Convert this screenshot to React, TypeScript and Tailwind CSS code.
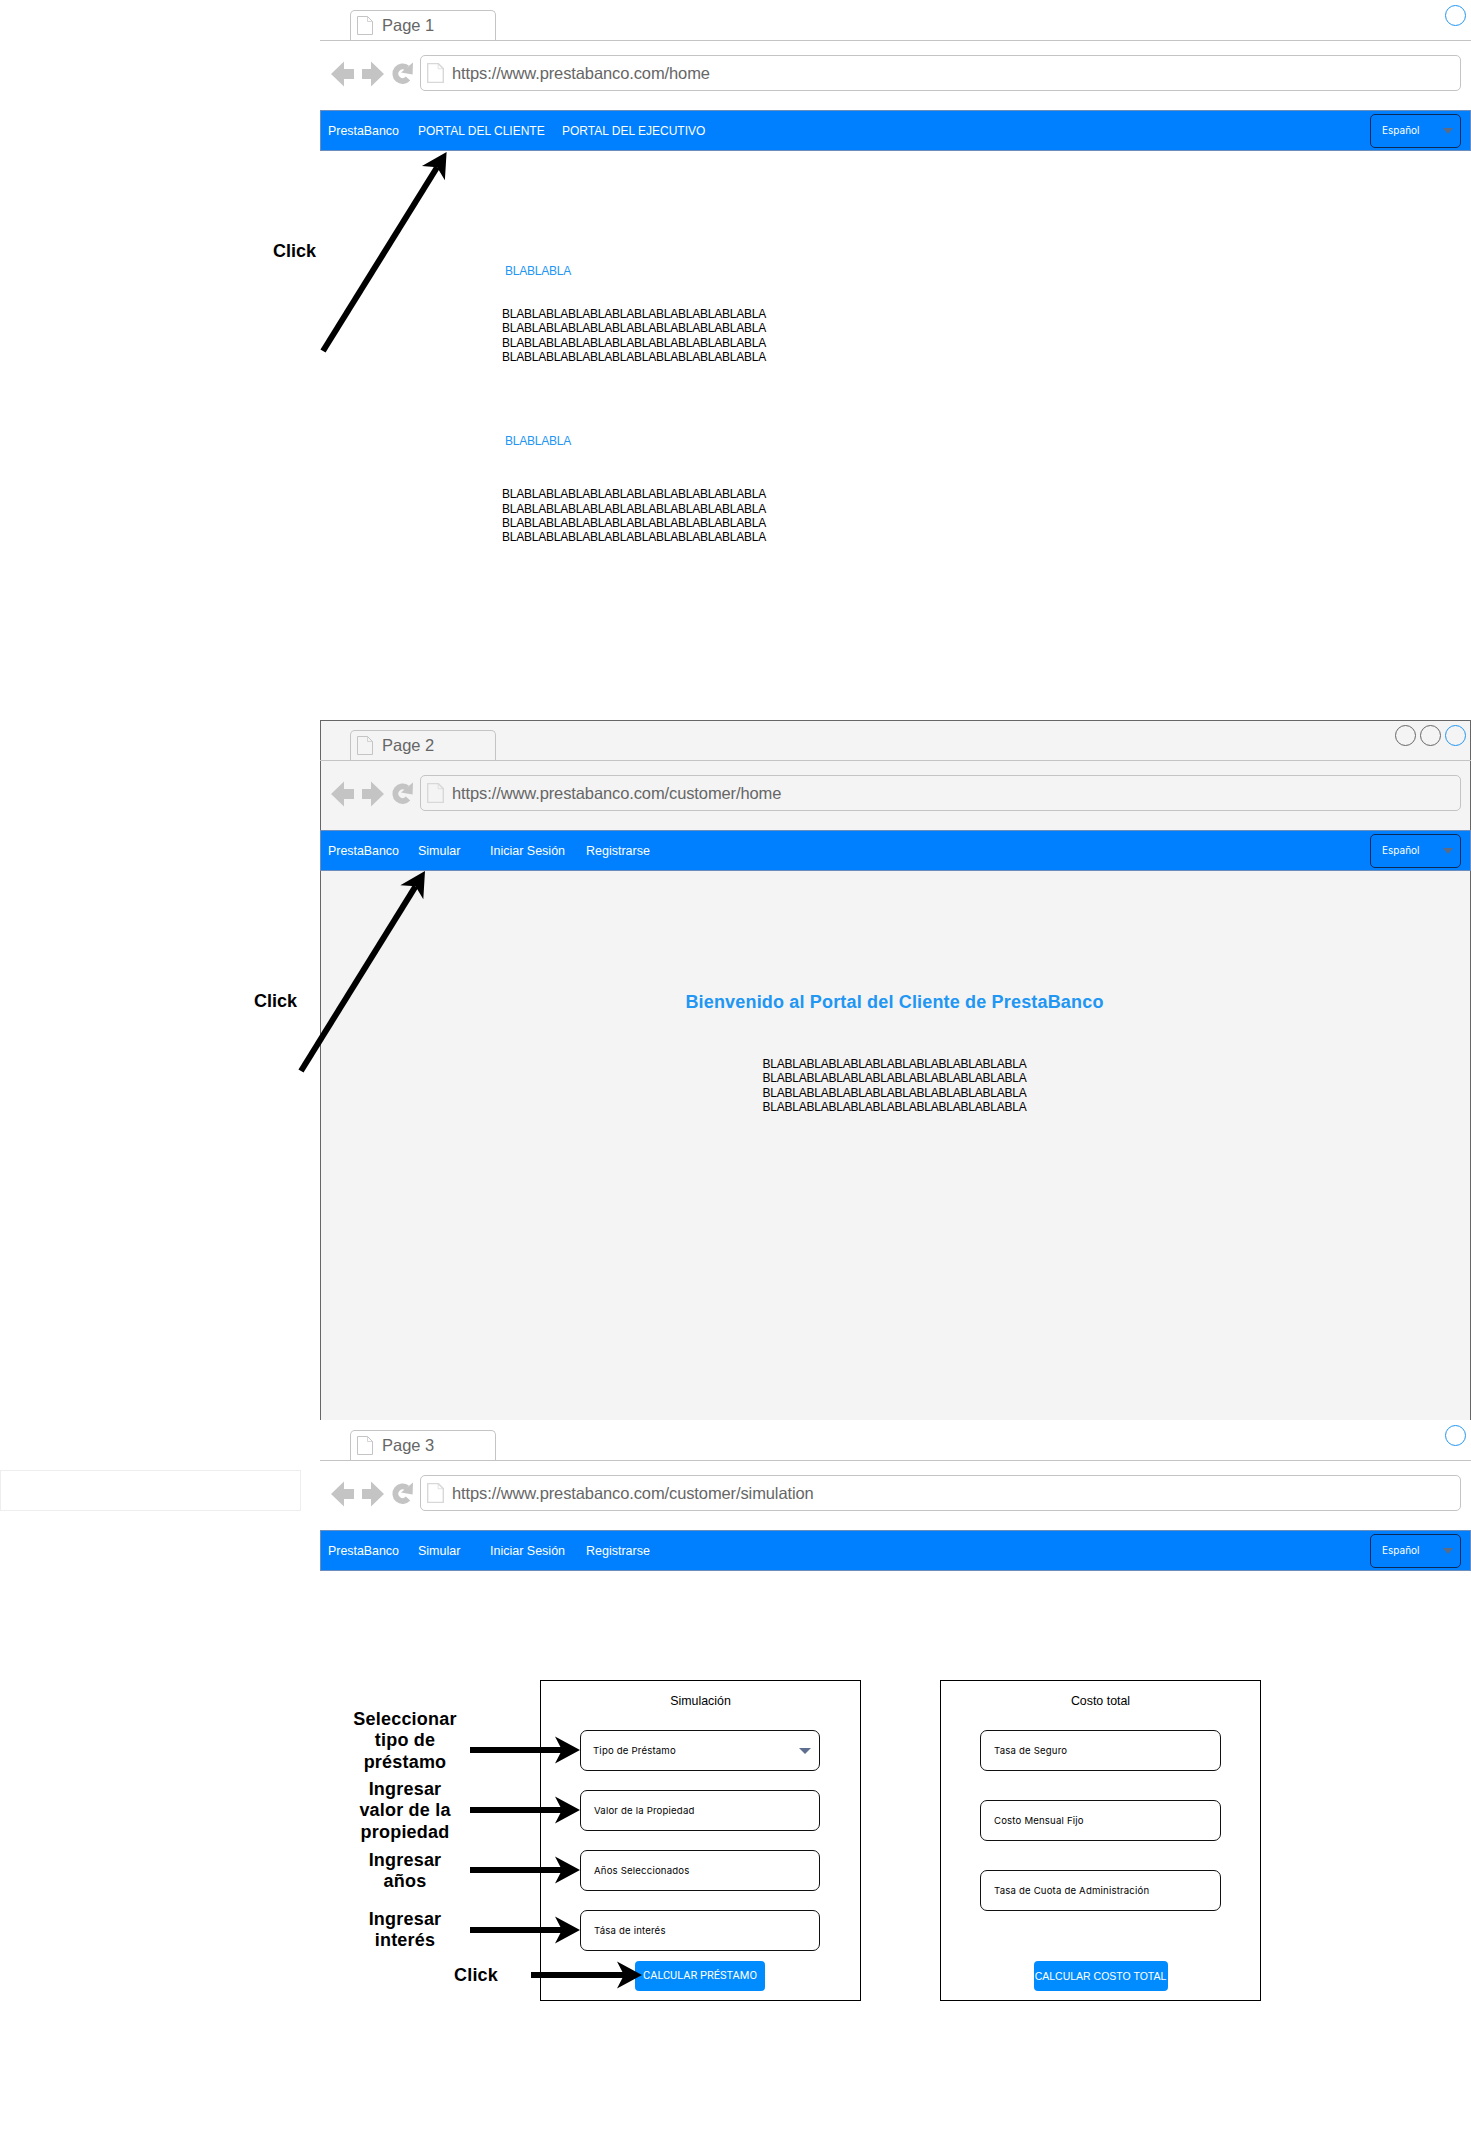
import React from "react";

const BLA = "BLABLABLABLABLABLABLABLABLABLABLABLA";

function PageIcon({ thick }: { thick?: boolean }) {
  return (
    <svg width={thick ? 17 : 16} height={thick ? 20 : 19} viewBox="0 0 16 19" fill="none" className="shrink-0">
      <path
        d="M0.5 0.5H10.5L15.5 5.5V18.5H0.5Z"
        stroke={thick ? "#d8d8d8" : "#c4c4c4"}
        strokeWidth={thick ? 1.5 : 1}
        fill="none"
      />
      <path d="M10.5 0.5V5.5H15.5" stroke={thick ? "#d8d8d8" : "#c4c4c4"} strokeWidth="0.7" fill="none" />
    </svg>
  );
}

function NavIcons() {
  return (
    <svg width="84" height="28" viewBox="0 0 84 28" className="shrink-0">
      <path d="M0 14L13 1.5V9H23V19H13V26.5Z" fill="#c4c4c4" />
      <path d="M53 14L40 1.5V9H31V19H40V26.5Z" fill="#c4c4c4" />
      <path d="M76 8A7.2 7.2 0 1 0 77 18.5" stroke="#c4c4c4" strokeWidth="6" fill="none" />
      <path d="M82 2.5L81.6 14.5L70 12.4Z" fill="#c4c4c4" />
    </svg>
  );
}

function BrowserChrome({ page, url, links }: { page: string; url: string; links: { label: string; className: string }[] }) {
  return (
    <>
      <div className="flex h-[41px] items-end border-b border-[#c4c4c4] pl-[30px]">
        <div className="-mb-px flex h-[31px] w-[146px] items-center gap-[9px] rounded-t-[5px] border border-b-0 border-[#c4c4c4] bg-inherit pb-px pl-[6px]">
          <PageIcon />
          <span className="text-[16.5px] text-[#666666]">{page}</span>
        </div>
      </div>
      <div className="flex h-[69px] items-start pl-[11px] pr-[10px] pt-[14px]">
        <div className="pr-[5px] pt-[5px]">
          <NavIcons />
        </div>
        <div className="flex h-[36px] flex-1 items-center gap-[8px] rounded-[5px] border border-[#c4c4c4] pl-[6px]">
          <PageIcon thick />
          <span className="text-[16.5px] tracking-[-0.11px] text-[#666666]">{url}</span>
        </div>
      </div>
      <div className="flex h-[41px] items-center border border-[#6c8ebf] bg-[#007fff] pl-[7px] pr-[9px]">
        <span className="w-[90px] pt-px text-[12.4px] text-white">PrestaBanco</span>
        {links.map((l) => (
          <span key={l.label} className={`${l.className} pt-px text-white`}>
            {l.label}
          </span>
        ))}
        <div className="ml-auto flex h-[34px] w-[91px] items-center justify-between rounded-[5px] border border-[#0b2a57] pl-[11px] pr-[7px] font-['Inter',sans-serif] text-[10px] text-white">
          <span>Español</span>
          <span className="h-0 w-0 border-x-[5.5px] border-t-[6px] border-x-transparent border-t-[#5f6b80]" />
        </div>
      </div>
    </>
  );
}

function WinButton({ color }: { color: string }) {
  return <span className={`h-[21px] w-[21px] rounded-full border ${color}`} />;
}

function Arrow({ x1, y1, x2, y2 }: { x1: number; y1: number; x2: number; y2: number }) {
  // classic block arrow, head drawn along the line direction
  const a = Math.atan2(y2 - y1, x2 - x1);
  const pt = (back: number, side: number) =>
    `${x2 - back * Math.cos(a) - side * Math.sin(a)},${y2 - back * Math.sin(a) + side * Math.cos(a)}`;
  const sx = x2 - 18 * Math.cos(a);
  const sy = y2 - 18 * Math.sin(a);
  return (
    <>
      <line x1={x1} y1={y1} x2={sx} y2={sy} stroke="#000" strokeWidth="6" />
      <polygon points={`${x2},${y2} ${pt(25, 13.5)} ${pt(18, 0)} ${pt(25, -13.5)}`} fill="#000" />
    </>
  );
}

function Paragraph() {
  return (
    <div className="text-[12px] leading-[14.33px] tracking-[-0.23px] text-black">
      <div>{BLA}</div>
      <div>{BLA}</div>
      <div>{BLA}</div>
      <div>{BLA}</div>
    </div>
  );
}

function Field({ label, caret, pad }: { label: string; caret?: boolean; pad: string }) {
  return (
    <div className={`flex h-[41px] items-center justify-between rounded-[7px] border border-[#111] ${pad} pr-[8px]`}>
      <span className="pt-[2px] font-['Inter',sans-serif] text-[9.6px] tracking-[0.18px] text-black">{label}</span>
      {caret && <span className="h-0 w-0 border-x-[6px] border-t-[6px] border-x-transparent border-t-[#5f6f8f]" />}
    </div>
  );
}

function SideLabel({ children, className }: { children: React.ReactNode; className: string }) {
  return (
    <div className={`absolute text-center text-[18px] font-bold leading-[21.3px] tracking-[0.2px] text-black ${className}`}>
      {children}
    </div>
  );
}

const customerLinks = [
  { label: "Simular", className: "w-[72px] text-[12.5px]" },
  { label: "Iniciar Sesión", className: "w-[96px] text-[12.5px]" },
  { label: "Registrarse", className: "w-[80px] text-[12.5px]" },
];

export default function App() {
  return (
    <div className="w-[1471px] overflow-hidden bg-white font-['Liberation_Sans',Arial,sans-serif]">
      {/* Page 1 */}
      <section className="relative flex h-[720px]">
        <div className="w-[320px] shrink-0" />
        <div className="flex-1 bg-white">
          <div className="relative">
            <BrowserChrome
              page="Page 1"
              url="https://www.prestabanco.com/home"
              links={[
                { label: "PORTAL DEL CLIENTE", className: "w-[144px] text-[12px]" },
                { label: "PORTAL DEL EJECUTIVO", className: "w-[150px] text-[12px]" },
              ]}
            />
            <div className="absolute right-[5px] top-[5px] flex">
              <WinButton color="border-[#2196f3]" />
            </div>
          </div>
          <div className="pl-[182px] pt-[113px]">
            <div className="pl-[3px] text-[12px] leading-[14px] tracking-[-0.23px] text-[#2196f3]">BLABLABLA</div>
            <div className="pt-[29px]">
              <Paragraph />
            </div>
            <div className="pl-[3px] pt-[70px] text-[12px] leading-[14px] tracking-[-0.23px] text-[#2196f3]">BLABLABLA</div>
            <div className="pt-[39px]">
              <Paragraph />
            </div>
          </div>
        </div>
        <div className="absolute left-[273px] top-[241px] text-[18px] font-bold leading-[21px] text-black">Click</div>
        <svg className="pointer-events-none absolute left-0 top-0" width="1471" height="720">
          <Arrow x1={323} y1={351} x2={446.6} y2={152} />
        </svg>
      </section>

      {/* Page 2 */}
      <section className="relative flex h-[700px]">
        <div className="w-[320px] shrink-0" />
        <div className="flex-1 border border-b-0 border-[#666666] bg-[#f4f4f4]">
          <div className="relative -mx-px -mt-px">
            <BrowserChrome page="Page 2" url="https://www.prestabanco.com/customer/home" links={customerLinks} />
            <div className="absolute right-[5px] top-[5px] flex gap-[4px]">
              <WinButton color="border-[#666666]" />
              <WinButton color="border-[#666666]" />
              <WinButton color="border-[#2196f3]" />
            </div>
          </div>
          <div className="flex flex-col items-center pr-[2px] pt-[118px]">
            <h1 className="text-[18px] font-bold leading-[26px] tracking-[0.17px] text-[#2196f3]">
              Bienvenido al Portal del Cliente de PrestaBanco
            </h1>
            <div className="pt-[42px]">
              <Paragraph />
            </div>
          </div>
        </div>
        <div className="absolute left-[254px] top-[271px] text-[18px] font-bold leading-[21px] text-black">Click</div>
        <svg className="pointer-events-none absolute left-0 top-0" width="1471" height="700">
          <Arrow x1={301} y1={351} x2={425} y2={151} />
        </svg>
      </section>

      {/* Page 3 */}
      <section className="relative flex h-[721px]">
        <div className="w-[320px] shrink-0 pr-[19px] pt-[50px]">
          <div className="h-[41px] border border-[#eeeeee]" />
        </div>
        <div className="flex-1 bg-white">
          <div className="relative">
            <BrowserChrome page="Page 3" url="https://www.prestabanco.com/customer/simulation" links={customerLinks} />
            <div className="absolute right-[5px] top-[5px] flex">
              <WinButton color="border-[#2196f3]" />
            </div>
          </div>
          <div className="flex gap-[80px] pl-[220px] pt-[109px]">
            <div className="flex h-[321px] w-[321px] flex-col border border-black pl-[39px] pr-[40px]">
              <div className="-ml-[39px] -mr-[40px] h-[49px] pt-[13px] text-center text-[12.4px] leading-[14px] text-black">Simulación</div>
              <div className="flex flex-col gap-[19px]">
                <Field label="Tipo de Préstamo" caret pad="pl-[12px]" />
                <Field label="Valor de la Propiedad" pad="pl-[13px]" />
                <Field label="Años Seleccionados" pad="pl-[13px]" />
                <Field label="Tása de interés" pad="pl-[13px]" />
              </div>
              <div className="flex justify-center pt-[10px]">
                <div className="flex h-[30px] w-[130px] items-center justify-center rounded-[4px] bg-[#008cff] pt-px font-['Roboto',sans-serif] text-[11px] text-white">
                  CALCULAR PRÉSTAMO
                </div>
              </div>
            </div>
            <div className="-ml-px flex h-[321px] w-[321px] flex-col border border-black px-[39px]">
              <div className="-mx-[39px] h-[49px] pt-[13px] text-center text-[12.4px] leading-[14px] text-black">Costo total</div>
              <div className="flex flex-col gap-[29px]">
                <Field label="Tasa de Seguro" pad="pl-[13px]" />
                <Field label="Costo Mensual Fijo" pad="pl-[13px]" />
                <Field label="Tasa de Cuota de Administración" pad="pl-[13px]" />
              </div>
              <div className="flex justify-center pt-[50px]">
                <div className="flex h-[30px] w-[134px] items-center justify-center whitespace-nowrap rounded-[4px] bg-[#008cff] pt-px text-[10.5px] text-white">
                  CALCULAR COSTO TOTAL
                </div>
              </div>
            </div>
          </div>
        </div>
        <SideLabel className="left-[345px] top-[289px] w-[120px]">
          Seleccionar
          <br />
          tipo de
          <br />
          préstamo
        </SideLabel>
        <SideLabel className="left-[345px] top-[359px] w-[120px]">
          Ingresar
          <br />
          valor de la
          <br />
          propiedad
        </SideLabel>
        <SideLabel className="left-[345px] top-[430px] w-[120px]">
          Ingresar
          <br />
          años
        </SideLabel>
        <SideLabel className="left-[345px] top-[489px] w-[120px]">
          Ingresar
          <br />
          interés
        </SideLabel>
        <SideLabel className="left-[454px] top-[545px]">Click</SideLabel>
        <svg className="pointer-events-none absolute left-0 top-0" width="1471" height="721">
          <Arrow x1={470} y1={330} x2={580} y2={330} />
          <Arrow x1={470} y1={390} x2={580} y2={390} />
          <Arrow x1={470} y1={450} x2={580} y2={450} />
          <Arrow x1={470} y1={510} x2={580} y2={510} />
          <Arrow x1={531} y1={555} x2={642} y2={555} />
        </svg>
      </section>
    </div>
  );
}
